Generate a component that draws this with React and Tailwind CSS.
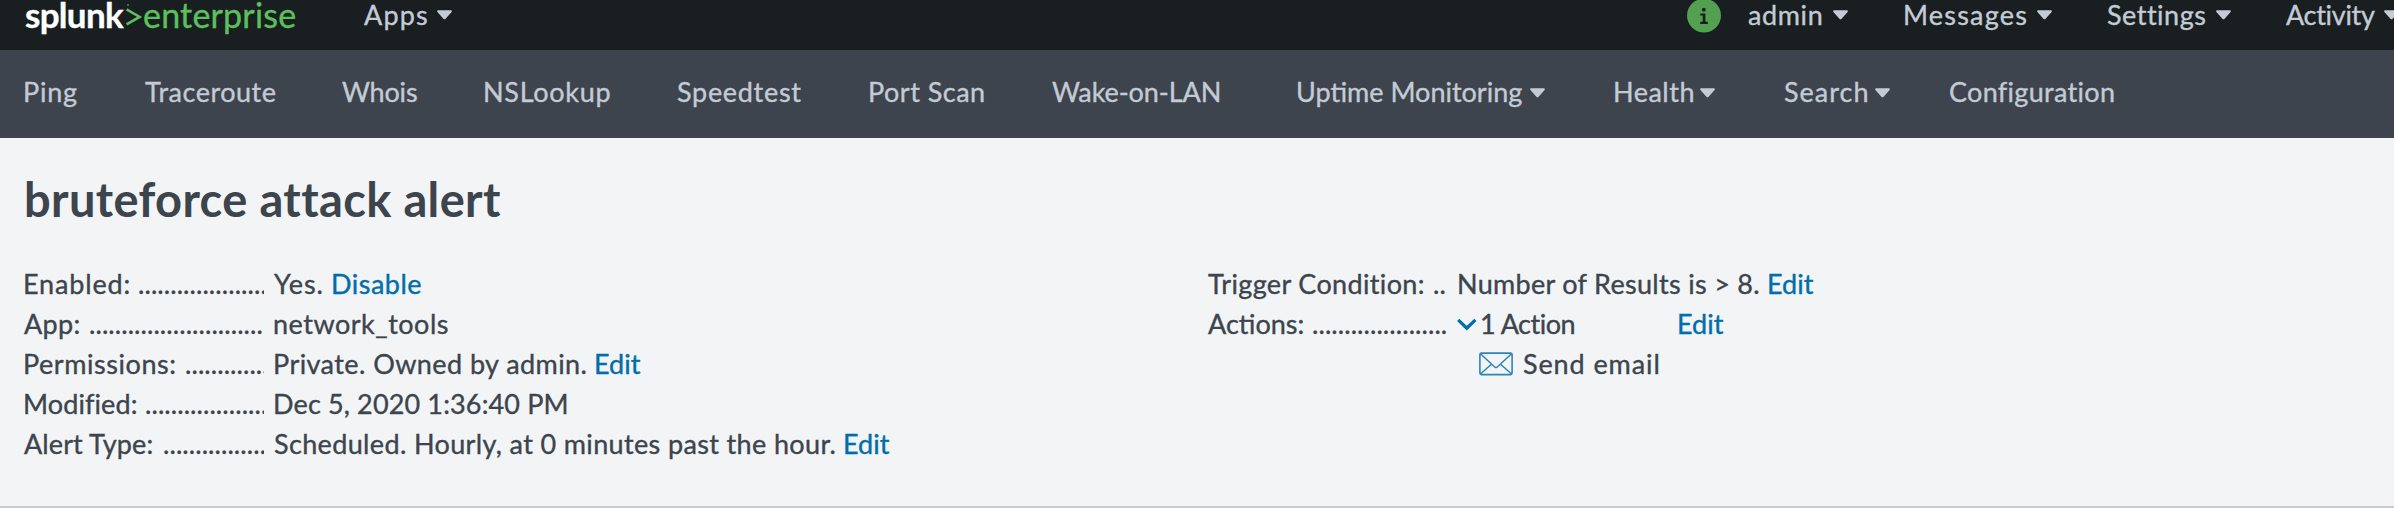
import React from "react";

function Caret({ className = "" }) {
  return (
    <svg className={`h-[10px] w-[15px] shrink-0 fill-[#c3cbd4] ${className}`} viewBox="0 0 15 10">
      <path d="M1.2 0.3h12.6c.9 0 1.3.9.8 1.6L8.6 8.8c-.6.7-1.6.7-2.2 0L.4 1.9C-.1 1.2.3.3 1.2.3z" />
    </svg>
  );
}

function TopItem({ label, className }) {
  return (
    <a className="flex shrink-0 items-start">
      <span className={`shrink-0 ${className}`}>{label}</span>
      <Caret className="mt-[9px]" />
    </a>
  );
}

function NavItem({ label, className, textClassName = "", caret }) {
  return (
    <a className={`flex shrink-0 items-center ${className}`}>
      <span className={`shrink-0 ${textClassName}`}>{label}</span>
      {caret && <Caret />}
    </a>
  );
}

function Row({ label, dots, labelClassName, dotsClassName, children }) {
  return (
    <div className="flex h-10">
      <dt className="flex w-[241px] shrink-0 overflow-hidden">
        <span className={`shrink-0 ${dotsClassName}`}>
          <span className={labelClassName}>{label}</span>
        </span>
        <span className="tracking-[0.07px]">{".".repeat(dots)}</span>
      </dt>
      <dd className="flex pl-[9px]">{children}</dd>
    </div>
  );
}

function Link({ children, className = "" }) {
  return <a className={`text-[#006eaa] ${className}`}>{children}</a>;
}

function Chevron() {
  return (
    <svg className="mt-[14px] h-[13px] w-[20px]" viewBox="0 0 20 13" fill="none">
      <path d="M1.2 1.8L9.8 10.2L18.4 1.8" stroke="#006eaa" strokeWidth="3.2" />
    </svg>
  );
}

function Envelope() {
  return (
    <svg className="mt-[8px] h-[24px] w-[34px]" viewBox="0 0 34 24" fill="none" stroke="#2f83bd">
      <rect x="0.9" y="1.1" width="32.2" height="21.5" rx="1.6" strokeWidth="1.6" />
      <path
        d="M1.5 1.8L15.4 14.8Q17 16.3 18.6 14.8L32.5 1.8M1.5 22L12.4 12.2M32.5 22L21.6 12.2"
        strokeWidth="1.5"
      />
    </svg>
  );
}

export default function App() {
  return (
    <div className="h-[508px] w-[2394px] overflow-hidden bg-[#f2f4f5] font-['Lato','Open_Sans',sans-serif] text-[27px] whitespace-nowrap text-[#3c444d] [-webkit-text-stroke:0.35px]">
      <header className="flex h-[50px] items-start bg-[#191e21] pt-px leading-[27px] text-[#c3cbd4]">
        <div className="flex w-[364px] shrink-0 items-start pl-[25px]">
          <span className="-mt-[2px] w-[100px] shrink-0 text-[35px] leading-[31px] font-bold tracking-[-0.7px] text-white">
            splunk
          </span>
          <svg className="mt-[3px] h-[22px] w-[18px] shrink-0" viewBox="0 0 18 22" fill="none">
            <path d="M1.6 5.4L14.6 13L1.6 20.4" stroke="#5cc05c" strokeWidth="2.6" />
            <path d="M2 0h2v2h-2z" fill="#3b7c3d" />
          </svg>
          <span className="-mt-[2px] text-[34px] leading-[31px] tracking-[0.2px] text-[#5cc05c]">
            enterprise
          </span>
        </div>
        <TopItem label="Apps" className="w-[73px] tracking-[1.2px]" />
        <div className="ml-auto flex shrink-0 items-start">
          <svg className="-mt-[3px] mr-[27px] h-[35px] w-[34px] shrink-0" viewBox="0 0 34 35">
            <circle cx="17" cy="17.6" r="17" fill="#53a051" />
            <g fill="#1a1e21">
              <circle cx="16.8" cy="11.7" r="1.9" />
              <path d="M13.2 15.4h5.2v8.4h2.4v2.2h-7.6v-2.2h2.5v-6.2h-2.5z" />
            </g>
          </svg>
          <div className="flex w-[155px] shrink-0">
            <TopItem label="admin" className="w-[85px] tracking-[0.6px]" />
          </div>
          <div className="flex w-[203px] shrink-0">
            <TopItem label="Messages" className="w-[134px] tracking-[1.2px]" />
          </div>
          <div className="flex w-[180px] shrink-0">
            <TopItem label="Settings" className="w-[110px] pl-px tracking-[0.5px]" />
          </div>
          <div className="flex w-[108px] shrink-0">
            <TopItem label="Activity" className="w-[98px] tracking-[-0.3px]" />
          </div>
        </div>
      </header>

      <nav className="flex h-[88px] bg-[#3e444e] pb-[3px] pl-[23px] text-[#c3cbd4]">
        <NavItem label="Ping" className="w-[122px]" textClassName="tracking-[0.8px]" />
        <NavItem label="Traceroute" className="w-[197px]" textClassName="tracking-[0.5px]" />
        <NavItem label="Whois" className="w-[141px]" textClassName="tracking-[-0.2px]" />
        <NavItem label="NSLookup" className="w-[194px]" textClassName="tracking-[0.7px]" />
        <NavItem label="Speedtest" className="w-[190px]" textClassName="tracking-[0.7px]" />
        <NavItem label="Port Scan" className="w-[185px]" textClassName="pl-px tracking-[0.5px]" />
        <NavItem label="Wake-on-LAN" className="w-[244px]" textClassName="tracking-[-0.1px]" />
        <NavItem label="Uptime Monitoring" className="w-[317px]" textClassName="w-[234px]" caret />
        <NavItem label="Health" className="w-[170px]" textClassName="w-[87px] tracking-[0.5px]" caret />
        <NavItem label="Search" className="w-[166px]" textClassName="w-[92px] pl-px tracking-[1px]" caret />
        <NavItem label="Configuration" className="w-[180px]" textClassName="tracking-[0.3px]" />
      </nav>

      <main className="h-[370px] border-b-2 border-[#c3cbd4] pt-[33px] pl-[23px]">
        <h1 className="pl-px text-[47px] leading-[56px] font-bold tracking-[0.35px] [-webkit-text-stroke:0px]">
          bruteforce attack alert
        </h1>
        <div className="mt-[37px] flex leading-10">
          <dl className="w-[1183px] shrink-0">
            <Row label="Enabled:" dots={20} labelClassName="tracking-[0.85px]" dotsClassName="w-[115px]">
              <span className="w-[58px] pl-[1px] tracking-[0.9px]">Yes.</span>
              <Link className="tracking-[0.5px]">Disable</Link>
            </Row>
            <Row label="App:" dots={27} labelClassName="pl-px tracking-[0.3px]" dotsClassName="w-[66px]">
              <span className="tracking-[0.5px]">network_tools</span>
            </Row>
            <Row label="Permissions:" dots={13} labelClassName="tracking-[0.55px]" dotsClassName="w-[162px]">
              <span className="w-[321px] tracking-[0.43px]">Private. Owned by admin.</span>
              <Link>Edit</Link>
            </Row>
            <Row label="Modified:" dots={19} labelClassName="tracking-[0.1px]" dotsClassName="w-[122px]">
              <span className="tracking-[0.14px]">Dec 5, 2020 1:36:40 PM</span>
            </Row>
            <Row label="Alert Type:" dots={16} labelClassName="pl-px tracking-[0.1px]" dotsClassName="w-[140px]">
              <span className="w-[570px] pl-[1px] tracking-[0.36px]">
                Scheduled. Hourly, at 0 minutes past the hour.
              </span>
              <Link>Edit</Link>
            </Row>
          </dl>
          <dl>
            <Row label="Trigger Condition:" dots={3} labelClassName="pl-[2px] tracking-[0.35px]" dotsClassName="w-[227px]">
              <span className="w-[311px] pl-px tracking-[0.3px]">Number of Results is &gt; 8.</span>
              <Link>Edit</Link>
            </Row>
            <Row label="Actions:" dots={21} labelClassName="pl-[2px]" dotsClassName="w-[106px]">
              <span className="w-[24px] pl-px">
                <Chevron />
              </span>
              <span className="w-[197px] tracking-[-0.5px]">1 Action</span>
              <Link>Edit</Link>
            </Row>
            <div className="flex h-10 pl-[273px]">
              <Envelope />
              <span className="pl-[10px] tracking-[0.9px]">Send email</span>
            </div>
          </dl>
        </div>
      </main>
    </div>
  );
}
